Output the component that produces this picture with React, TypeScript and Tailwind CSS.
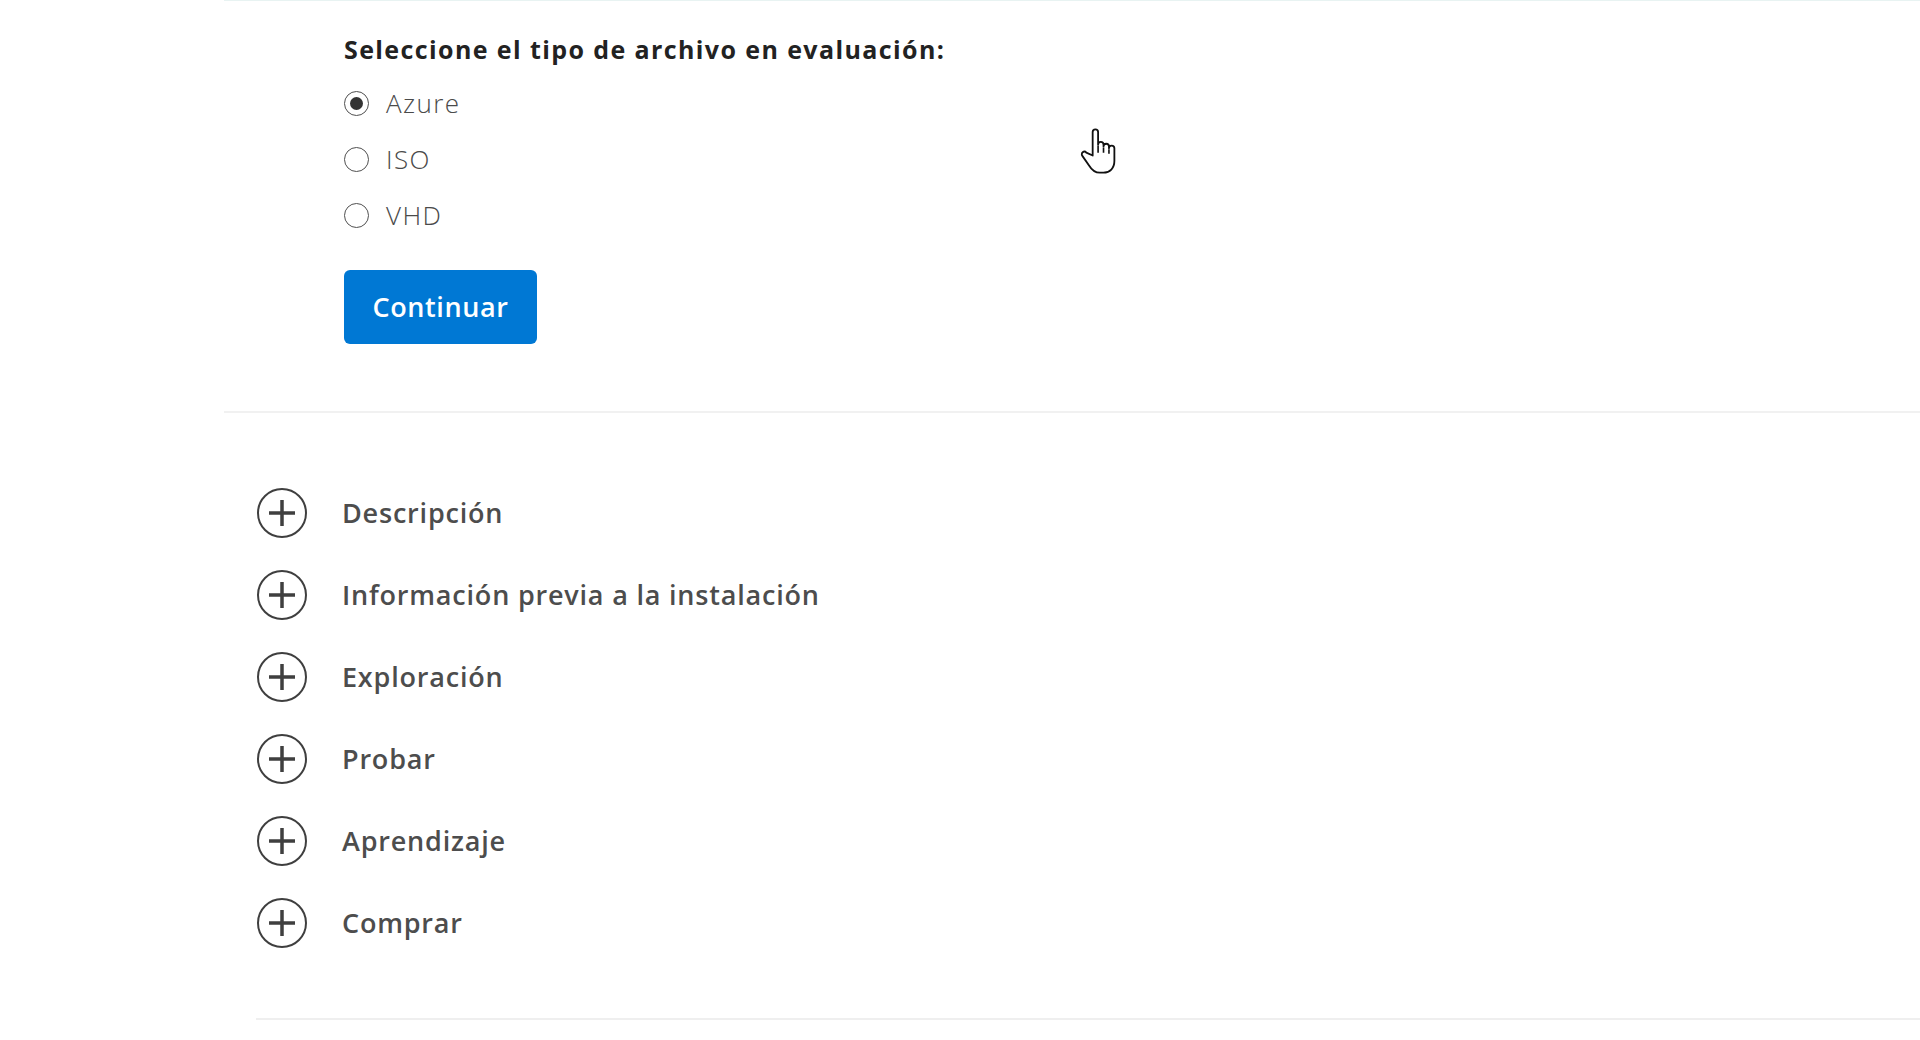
import { useState } from "react";

const options = ["Azure", "ISO", "VHD"];

const sections = [
  "Descripción",
  "Información previa a la instalación",
  "Exploración",
  "Probar",
  "Aprendizaje",
  "Comprar",
];

function PlusCircle() {
  return (
    <svg width="52" height="52" viewBox="0 0 52 52" fill="none" className="shrink-0">
      <circle cx="26" cy="26" r="24" stroke="#3f3f3f" strokeWidth="2" />
      <path d="M13 26h26M26 13v26" stroke="#3f3f3f" strokeWidth="3.5" />
    </svg>
  );
}

function HandCursor() {
  return (
    <svg
      width="38"
      height="50"
      viewBox="0 0 21 27"
      className="absolute left-[1080px] top-[126px] pointer-events-none"
    >
      <path
        d="M7 16V3a1.5 1.5 0 0 1 3 0v7a1.5 1.5 0 0 1 3 0v1a1.5 1.5 0 0 1 3 0v1a1.5 1.5 0 0 1 3 0v7c0 4-2.5 6.5-6 6.5h-2c-3 0-4.5-1.5-6-4L1.3 16.2a1.4 1.4 0 0 1 2.2-1.8Z"
        fill="#fff"
        stroke="#111"
        strokeWidth="1"
        strokeLinejoin="round"
      />
      <path d="M10 10.5v4M13 11.5v3M16 12.5v2.5" stroke="#111" strokeWidth="0.9" />
    </svg>
  );
}

export default function App() {
  const [value, setValue] = useState("Azure");

  return (
    <main
      className="relative min-h-screen bg-white pl-[224px] text-[#262626]"
      style={{ fontFamily: '"Open Sans", "Noto Sans", sans-serif' }}
    >
      <section className="border-t border-[#e8f3f2] border-b-2 border-b-[#f1f1f1] pt-[32px] pl-[120px] pb-[67px]">
        <h2 className="text-[25px] leading-[32px] font-bold text-[#222] tracking-[1.4px]">
          Seleccione el tipo de archivo en evaluación:
        </h2>
        <div className="mt-[10px] flex flex-col">
          {options.map((opt) => (
            <label key={opt} className="flex h-[56px] items-center gap-[17px] cursor-pointer">
              <span className="flex h-[25px] w-[25px] items-center justify-center rounded-full border-[1.5px] border-[#505050]">
                {value === opt && <span className="h-[13px] w-[13px] rounded-full bg-[#333]" />}
              </span>
              <input
                type="radio"
                name="tipo"
                className="hidden"
                checked={value === opt}
                onChange={() => setValue(opt)}
              />
              <span className="text-[26px] font-light tracking-[1.4px] text-[#4a4a4a]">{opt}</span>
            </label>
          ))}
        </div>
        <button className="mt-[27px] h-[74px] w-[193px] rounded-[6px] bg-[#0078d4] text-[27px] font-semibold tracking-[0.6px] text-white">
          Continuar
        </button>
      </section>

      <div className="pt-[59px] pl-[32px]">
        {sections.map((s) => (
          <div key={s} className="flex h-[82px] items-center gap-[34px]">
            <PlusCircle />
            <span className="text-[27px] font-semibold tracking-[0.8px] text-[#4d4d4d]">{s}</span>
          </div>
        ))}
      </div>

      <div className="ml-[32px] mt-[54px] border-t-2 border-[#efefef]" />

      <HandCursor />
    </main>
  );
}
